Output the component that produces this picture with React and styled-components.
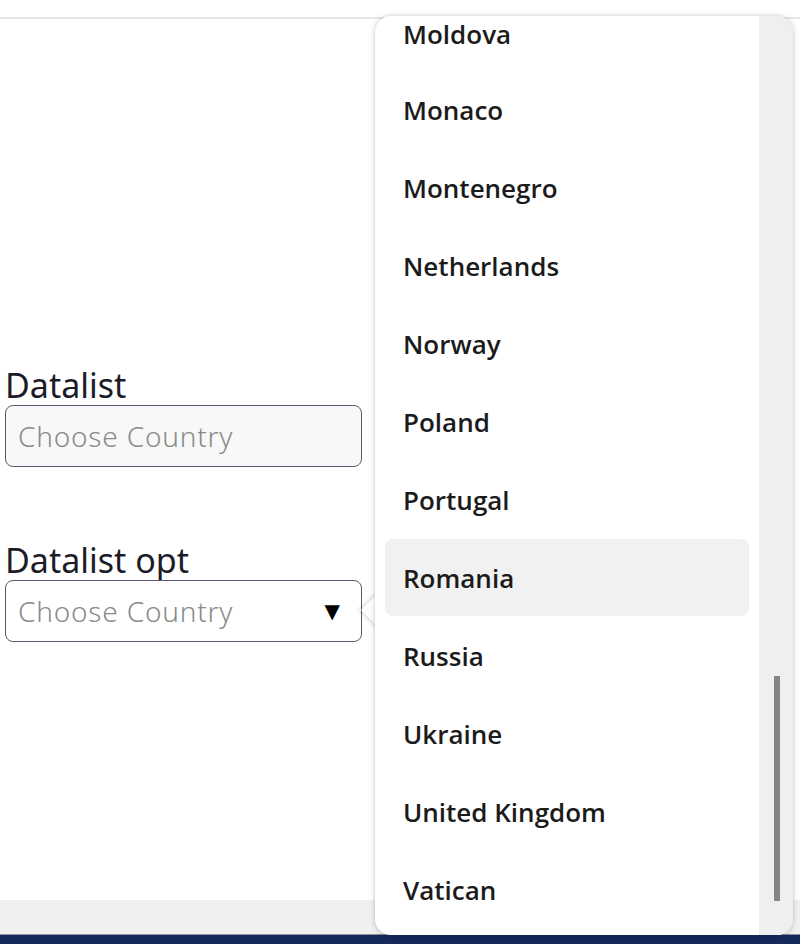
import React from 'react';
import styled, { createGlobalStyle } from 'styled-components';

const GlobalStyle = createGlobalStyle`
  html, body {
    margin: 0;
    padding: 0;
    background: #ffffff;
  }
`;

const Page = styled.div`
  position: relative;
  display: flex;
  flex-direction: column;
  width: 800px;
  height: 944px;
  overflow: hidden;
`;

const TopStrip = styled.div`
  height: 17px;
  border-bottom: 2px solid #e6e6e6;
  background: #ffffff;
`;

const Content = styled.main`
  flex: 1;
  padding: 348px 0 0 5px;
  background: #ffffff;
`;

const Form = styled.div`
  display: flex;
  flex-direction: column;
  gap: 75px;
  width: 357px;
`;

const Field = styled.div`
  display: flex;
  flex-direction: column;
  gap: 2px;
`;

const Label = styled.label`
  font-family: 'Noto Sans', sans-serif;
  font-size: 34px;
  line-height: 36px;
  color: #1c1c28;
`;

const InputBox = styled.div`
  position: relative;
  display: flex;
  align-items: center;
  justify-content: space-between;
  height: 60px;
  padding: 0 21px 0 12px;
  border: 1.5px solid #5c5670;
  border-radius: 8px;
  background: ${p => (p.$filled ? '#f8f8f8' : '#ffffff')};
`;

const Placeholder = styled.span`
  font-family: 'Noto Sans', sans-serif;
  font-size: 28px;
  font-weight: 300;
  letter-spacing: 0.8px;
  color: #8a8a8a;
`;

const Caret = styled.span`
  font-size: 20px;
  color: #000;
  font-family: 'DejaVu Sans', sans-serif;
`;

const HScroll = styled.div`
  height: 34px;
  background: #f0f0f0;
`;

const Taskbar = styled.div`
  height: 9px;
  border-top: 1px solid #8a8f99;
  background: #15295a;
`;

const Popup = styled.div`
  position: absolute;
  top: 16px;
  left: 375px;
  width: 418px;
  height: 919px;
  display: flex;
  background: #ffffff;
  border-radius: 16px;
  box-shadow: 0 0 4px rgba(0, 0, 0, 0.18), 0 2px 8px rgba(0, 0, 0, 0.08);
  overflow: hidden;
`;

const Pointer = styled.div`
  position: absolute;
  top: 598px;
  left: 366px;
  width: 24px;
  height: 24px;
  background: #ffffff;
  transform: rotate(45deg);
  box-shadow: -2px 2px 4px rgba(0, 0, 0, 0.12);
`;

const ListViewport = styled.div`
  flex: 1;
  overflow: hidden;
`;

const List = styled.ul`
  margin: 0;
  padding: 0 10px;
  list-style: none;
`;

const Option = styled.li`
  display: flex;
  align-items: center;
  height: 77px;
  margin-bottom: 1px;
  padding-left: 18px;
  border-radius: 8px;
  background: ${p => (p.$active ? '#f1f1f1' : 'transparent')};
  font-family: 'Open Sans', sans-serif;
  font-weight: 600;
  font-size: 26px;
  color: #1b1b1b;

  /* list is scrolled: the first row peeks in partly */
  &:first-child {
    height: 54px;
    padding-bottom: 18px;
    box-sizing: border-box;
  }
`;

const Track = styled.div`
  position: relative;
  width: 34px;
  background: #efefef;
`;

const Thumb = styled.div`
  position: absolute;
  left: 15px;
  width: 6px;
  background: #858585;
`;

const countries = [
  'Moldova',
  'Monaco',
  'Montenegro',
  'Netherlands',
  'Norway',
  'Poland',
  'Portugal',
  'Romania',
  'Russia',
  'Ukraine',
  'United Kingdom',
  'Vatican',
];

function App() {
  return (
    <>
      <GlobalStyle />
      <Page>
        <TopStrip />
        <Content>
          <Form>
            <Field>
              <Label>Datalist</Label>
              <InputBox $filled>
                <Placeholder>Choose Country</Placeholder>
              </InputBox>
            </Field>
            <Field>
              <Label>Datalist opt</Label>
              <InputBox>
                <Placeholder>Choose Country</Placeholder>
                <Caret>▼</Caret>
              </InputBox>
            </Field>
          </Form>
        </Content>
        <HScroll />
        <Taskbar />
        <Pointer />
        <Popup>
          <ListViewport>
            <List>
              {countries.map(name => (
                <Option key={name} $active={name === 'Romania'}>
                  {name}
                </Option>
              ))}
            </List>
          </ListViewport>
          <Track>
            <Thumb style={{ top: 660, height: 225 }} />
          </Track>
        </Popup>
      </Page>
    </>
  );
}

export default App;
